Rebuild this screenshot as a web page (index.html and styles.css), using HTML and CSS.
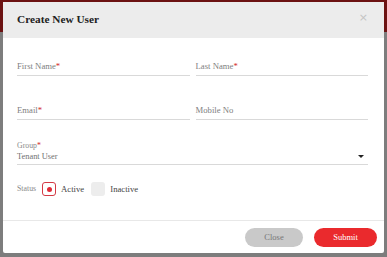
FILE: index.html
```html
<!DOCTYPE html>
<html lang="en">
<head>
    <meta charset="UTF-8">
    <meta name="viewport" content="width=device-width, initial-scale=1.0">
    <title>Create New User</title>
    <link rel="stylesheet" href="styles.css">
</head>
<body>
<div class="page-header"></div>
<div class="page-body"></div>

<div class="modal">
    <div class="modal-header">
        <h2>Create New User</h2>
        <span class="close">&times;</span>
    </div>

    <form class="modal-body">
        <div class="row">
            <div class="field">First Name<em>*</em></div>
            <div class="field">Last Name<em>*</em></div>
        </div>
        <div class="row">
            <div class="field">Email<em>*</em></div>
            <div class="field">Mobile No</div>
        </div>
        <div class="field select">
            <span class="small-label">Group<em>*</em></span>
            <span class="value">Tenant User</span>
            <span class="caret"></span>
        </div>
        <div class="status">
            <span class="status-label">Status</span>
            <span class="radio checked"></span>
            <span class="option">Active</span>
            <span class="radio"></span>
            <span class="option">Inactive</span>
        </div>
    </form>

    <div class="modal-footer">
        <button type="button" class="btn btn-close">Close</button>
        <button type="submit" class="btn btn-submit">Submit</button>
    </div>
</div>
</body>
</html>
```

FILE: styles.css
```css
* {
    margin: 0;
    padding: 0;
    box-sizing: border-box;
    font-family: "Liberation Serif", "Times New Roman", serif;
}

body {
    background-color: #7d7d7d;
    height: 100vh;
    overflow: hidden;
}

.page-header {
    height: 32px;
    background-color: #6c1212;
}

.modal {
    position: fixed;
    top: 2px;
    left: 3px;
    width: 381px;
    height: 251px;
    background-color: white;
    border-radius: 2px;
    display: flex;
    flex-direction: column;
}

.modal-header {
    height: 36px;
    flex-shrink: 0;
    background-color: #ececec;
    display: flex;
    align-items: center;
    justify-content: space-between;
    padding: 0 16px 2px 14px;
}

.modal-header h2 {
    font-size: 11.3px;
    font-weight: bold;
    color: #222;
}

.close {
    font-size: 11px;
    color: #c4c4c4;
    font-family: "DejaVu Sans", sans-serif;
    margin-bottom: 3px;
}

.modal-body {
    flex: 1;
    font-size: 8.7px;
    padding: 23px 16px 0 14px;
}

.row {
    display: flex;
    gap: 6px;
    margin-bottom: 29px;
}

.row + .row {
    margin-bottom: 21px;
}

.field {
    flex: 1;
    font-size: 8.7px;
    line-height: 11px;
    color: #808080;
    border-bottom: 1px solid #d9d9d9;
    padding-bottom: 3px;
}

em {
    font-style: normal;
    color: #d42a2a;
}

.select {
    position: relative;
    display: flex;
    flex-direction: column;
    padding-bottom: 1px;
    margin-bottom: 17px;
}

.small-label {
    font-size: 7.8px;
    color: #8a8a8a;
    line-height: 10px;
}

.value {
    font-size: 8.4px;
    color: #707070;
    line-height: 12px;
}

.caret {
    position: absolute;
    right: 4px;
    bottom: 6px;
    border-left: 3px solid transparent;
    border-right: 3px solid transparent;
    border-top: 3px solid #222;
}

.status {
    display: flex;
    align-items: center;
    line-height: 14px;
}

.status-label {
    font-size: 7.8px;
    color: #888;
    margin-right: 6px;
}

.radio {
    width: 14px;
    height: 14px;
    border-radius: 3px;
    background-color: #ededed;
    margin-right: 5px;
    display: flex;
    align-items: center;
    justify-content: center;
}

.radio.checked {
    background-color: white;
    border: 1.5px solid #d33a45;
}

.radio.checked::after {
    content: "";
    width: 5px;
    height: 5px;
    border-radius: 50%;
    background-color: #e02a36;
}

.option {
    font-size: 8.7px;
    color: #444;
    margin-right: 7px;
}

.modal-footer {
    height: 33px;
    flex-shrink: 0;
    border-top: 1px solid #e8e8e8;
    display: flex;
    justify-content: flex-end;
    align-items: center;
    gap: 11px;
    padding: 0 7px 0 0;
}

.btn {
    height: 19px;
    border: none;
    border-radius: 10px;
    font-size: 8.5px;
    cursor: pointer;
}

.btn-close {
    width: 58px;
    background-color: #c9c9c9;
    color: #777;
}

.btn-submit {
    width: 63px;
    background-color: #ea2a2d;
    color: white;
}
```
